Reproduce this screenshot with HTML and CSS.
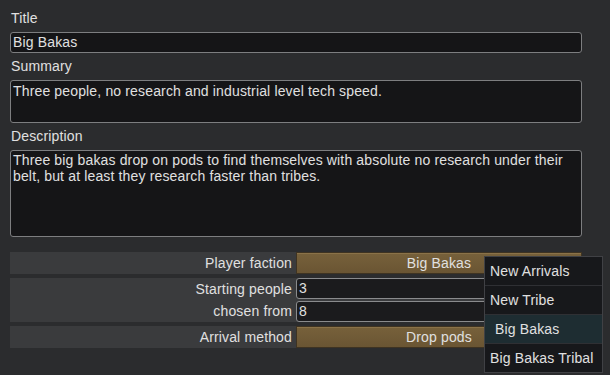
FILE: index.html
```html
<!DOCTYPE html>
<html lang="en">
<head>
    <meta charset="UTF-8">
    <title>Scenario</title>
    <link rel="stylesheet" href="styles.css">
</head>
<body>
    <div class="page">
        <div class="label">Title</div>
        <div class="field single">Big Bakas</div>

        <div class="label">Summary</div>
        <div class="field summary">Three people, no research and industrial level tech speed.</div>

        <div class="label">Description</div>
        <div class="field description">Three big bakas drop on pods to find themselves with absolute no research under their belt, but at least they research faster than tribes.</div>

        <div class="rows">
            <!-- Facción del jugador -->
            <div class="row">
                <div class="row-label">Player faction</div>
                <div class="btn">Big Bakas</div>
            </div>

            <!-- Gente inicial -->
            <div class="row double">
                <div class="row-label">Starting people</div>
                <div class="num">3</div>
                <div class="row-label">chosen from</div>
                <div class="num">8</div>
            </div>

            <!-- Método de llegada -->
            <div class="row">
                <div class="row-label">Arrival method</div>
                <div class="btn">Drop pods</div>
            </div>
        </div>
    </div>

    <!-- Menú desplegable de facciones -->
    <div class="menu">
        <div class="menu-item">New Arrivals</div>
        <div class="menu-item">New Tribe</div>
        <div class="menu-item active">Big Bakas</div>
        <div class="menu-item">Big Bakas Tribal</div>
    </div>
</body>
</html>
```

FILE: styles.css
```css
/* Fondo general */
body {
    margin: 0;
    background-color: #2b2c2e;
    font-family: "Liberation Sans", Arial, sans-serif;
    font-size: 14px;
    letter-spacing: 0.15px;
    color: #e0e0e0;
    width: 610px;
    height: 375px;
    overflow: hidden;
}
/* Contenedor principal */
.page {
    padding: 10px 28px 0 10px;
}
/* Etiquetas de los campos */
.label {
    line-height: 16px;
    padding-left: 1px;
    margin-bottom: 6px;
}
/* Campos de texto */
.field {
    background-color: #151517;
    border: 1px solid #7d7e80;
    border-radius: 3px;
    line-height: 16px;
    padding: 0 2px;
    margin-bottom: 5px;
}
.single {
    height: 19px;
    line-height: 19px;
}
.summary {
    height: 39px;
    padding-top: 2px;
}
.description {
    height: 84px;
    padding-top: 1px;
    margin-bottom: 15px;
}
/* Filas de opciones */
.rows {
    display: flex;
    flex-direction: column;
    gap: 4px;
}
.row {
    display: grid;
    grid-template-columns: 286px 286px;
    background-color: #3a3b3d;
    height: 22px;
}
.row.double {
    height: 44px;
    grid-template-rows: 22px 22px;
}
.row-label {
    text-align: right;
    padding-right: 4px;
    line-height: 22px;
}
/* Botones marrones */
.btn {
    background: linear-gradient(#77613b, #6a5533);
    border: 1px solid #3e3322;
    box-shadow: inset 0 1px 0 #8a7248;
    text-align: center;
    line-height: 20px;
    height: 20px;
}
/* Campos numéricos */
.num {
    background-color: #1b1b1d;
    border: 1px solid #8a8b8d;
    border-radius: 3px;
    height: 19px;
    line-height: 19px;
    padding: 0 2px;
    margin-bottom: 1px;
}
.double .num:last-child {
    margin-top: 1px;
    margin-bottom: 0;
}
/* Menú desplegable */
.menu {
    position: absolute;
    left: 484px;
    top: 256px;
    width: 117px;
    background-color: #17181b;
    border: 1px solid #404145;
}
.menu-item {
    height: 28px;
    line-height: 28px;
    padding-left: 5px;
    border-bottom: 1px solid #2f3034;
}
.menu-item:last-child {
    border-bottom: none;
}
.menu-item.active {
    background-color: #1e2d32;
    padding-left: 10px;
}
```
